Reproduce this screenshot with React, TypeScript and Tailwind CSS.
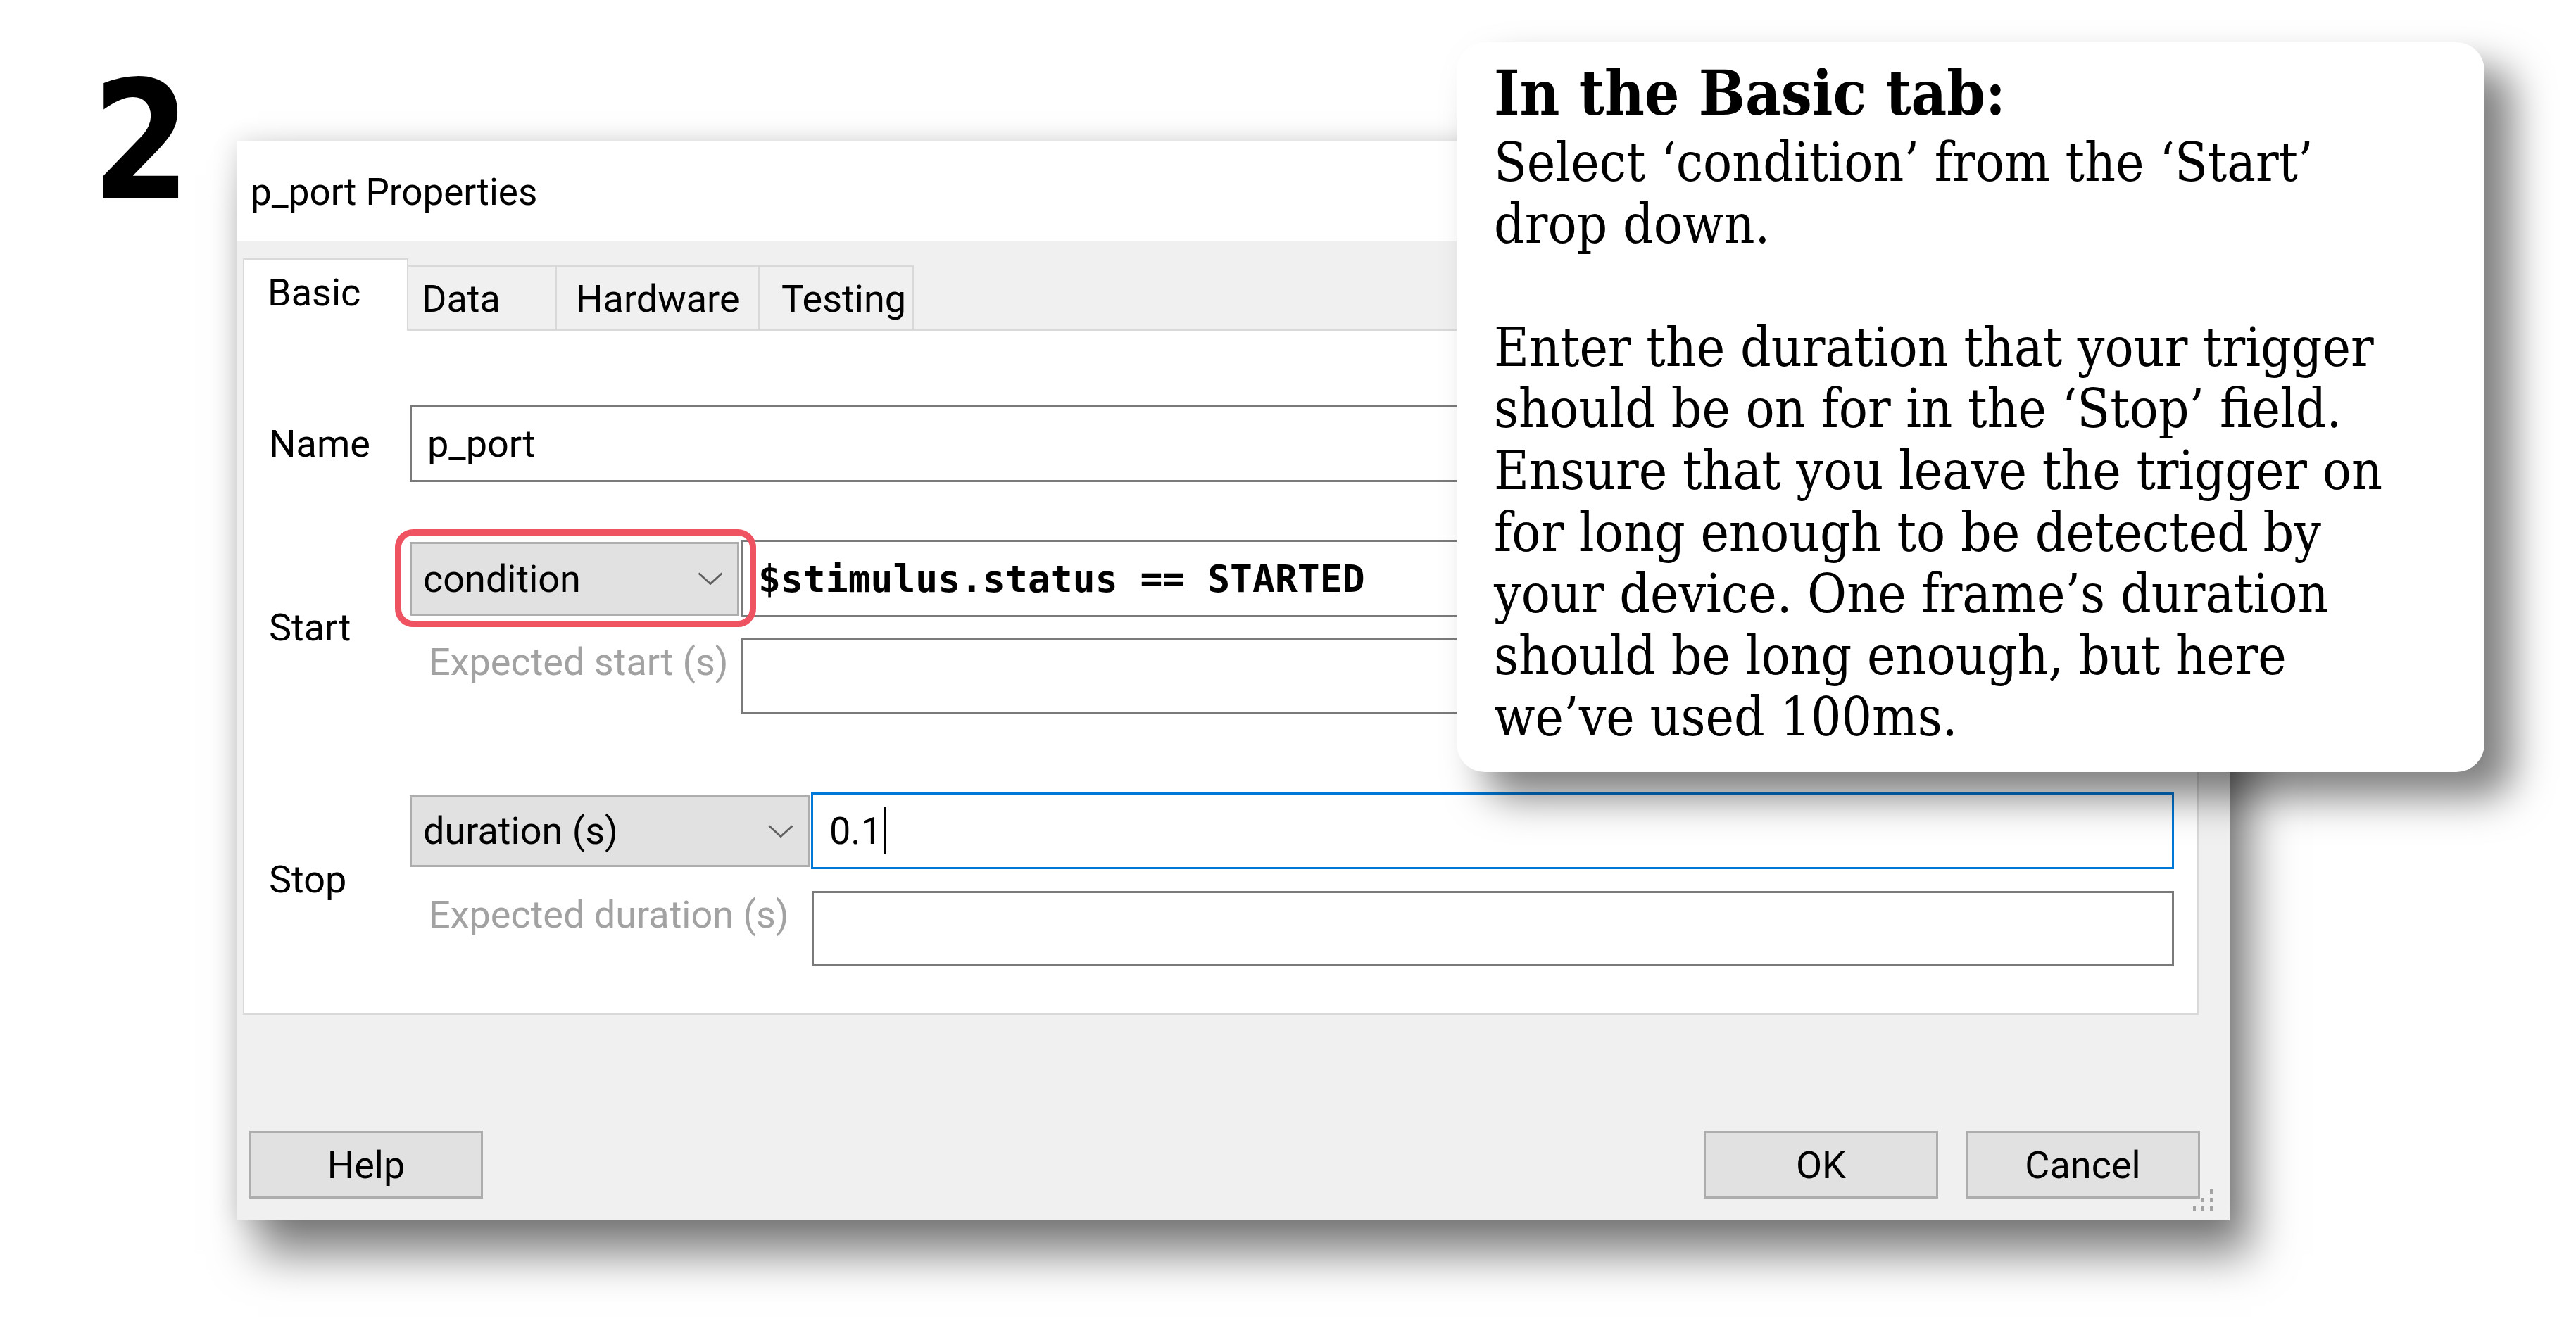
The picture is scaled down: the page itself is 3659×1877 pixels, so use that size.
import React from 'react';

const ui = "font-['Roboto','Open_Sans',sans-serif]";

function Chevron() {
  return (
    <svg width="36" height="18" viewBox="0 0 36 18" fill="none" className="shrink-0">
      <polyline points="1.5,1.5 18,16.5 34.5,1.5" stroke="#5f5f5f" strokeWidth="2.8" />
    </svg>
  );
}

function Combo({ label, className }: { label: string; className: string }) {
  return (
    <div
      className={`${className} shrink-0 bg-[#e1e1e1] border-[3px] border-[#adadad] flex items-center justify-between pl-[16px] pr-[20px]`}
    >
      <span>{label}</span>
      <Chevron />
    </div>
  );
}

function TextBox({ className, children }: { className: string; children?: React.ReactNode }) {
  return (
    <div className={`${className} flex-1 bg-white border-[3px] border-[#7a7a7a] flex items-center`}>
      {children}
    </div>
  );
}

function Button({ label, className }: { label: string; className: string }) {
  return (
    <div
      className={`${className} h-[96px] bg-[#e1e1e1] border-[3px] border-[#adadad] flex items-center justify-center`}
    >
      {label}
    </div>
  );
}

function SizeGrip() {
  return (
    <svg width="38" height="38" viewBox="0 0 38 38" className="absolute right-[20px] bottom-[10px]">
      {[
        [30, 4],
        [30, 16],
        [18, 16],
        [30, 28],
        [18, 28],
        [6, 28],
      ].map(([x, y]) => (
        <rect key={`${x}-${y}`} x={x} y={y} width="4" height="6" fill="#a3a3a3" />
      ))}
    </svg>
  );
}

function Dialog() {
  return (
    <div
      className={`${ui} relative w-[2831px] h-[1534px] mt-[115px] shrink-0 bg-[#f0f0f0] text-black text-[54px] leading-[63px] shadow-[30px_48px_60px_rgba(0,0,0,0.5),0_0_34px_rgba(0,0,0,0.14)] flex flex-col`}
    >
      {/* title bar */}
      <div className="h-[143px] shrink-0 bg-white pl-[20px] pt-[42px] text-[53px] leading-[62px]">
        p_port Properties
      </div>

      <div className="flex flex-col pl-[9px] pr-[44px] pt-[24px]">
        {/* tabs */}
        <div className="flex items-end h-[101px]">
          <div className="relative z-10 w-[235px] h-[103px] -mb-[2px] bg-white border-[2px] border-b-0 border-[#d9d9d9] pl-[33px] pt-[15px]">
            Basic
          </div>
          <div className="w-[211px] h-[91px] border-t-[2px] border-r-[2px] border-[#d9d9d9] pl-[19px] pt-[14px]">
            Data
          </div>
          <div className="w-[288px] h-[91px] border-t-[2px] border-r-[2px] border-[#d9d9d9] pl-[27px] pt-[14px]">
            Hardware
          </div>
          <div className="w-[219px] h-[91px] border-t-[2px] border-r-[2px] border-[#d9d9d9] pl-[31px] pt-[14px]">
            Testing
          </div>
        </div>

        {/* tab panel */}
        <div className="h-[974px] bg-white border-[2px] border-[#d9d9d9] pl-[35px] pr-[33px] pt-[106px] flex flex-col">
          <div className="flex items-center">
            <div className="w-[200px] shrink-0">Name</div>
            <TextBox className="h-[109px] pl-[22px]">p_port</TextBox>
          </div>

          {/* Start */}
          <div className="flex mt-[82px]">
            <div className="w-[200px] shrink-0 self-center">Start</div>
            <div className="flex-1 flex flex-col">
              <div className="flex items-center">
                <div className="relative mr-[2px]">
                  <Combo label="condition" className="w-[468px] h-[105px]" />
                  <div className="absolute z-10 left-[-21px] top-[-18px] right-[-24px] bottom-[-16px] border-[9px] border-[#ef5361] rounded-[26px]" />
                </div>
                <TextBox className="h-[110px] pl-[22px]">
                  <span className="font-['DejaVu_Sans_Mono','Liberation_Mono',monospace] font-bold text-[53px]">
                    $stimulus.status == STARTED
                  </span>
                </TextBox>
              </div>
              <div className="flex items-start mt-[30px]">
                <div className="w-[471px] shrink-0 pl-[27px] mt-[2px] text-[#a2a2a2]">Expected start (s)</div>
                <TextBox className="h-[108px]" />
              </div>
            </div>
          </div>

          {/* Stop */}
          <div className="flex mt-[111px]">
            <div className="w-[200px] shrink-0 self-center">Stop</div>
            <div className="flex-1 flex flex-col">
              <div className="flex items-center">
                <Combo label="duration (s)" className="w-[568px] h-[102px] mr-[2px]" />
                <div className="flex-1 h-[109px] bg-white border-[3px] border-[#0078d7] flex items-center pl-[23px]">
                  <span>0.1</span>
                  <span className="w-[3px] h-[67px] bg-black ml-[3px]" />
                </div>
              </div>
              <div className="flex items-start mt-[31px]">
                <div className="w-[571px] shrink-0 pl-[27px] mt-[2px] text-[#a2a2a2]">Expected duration (s)</div>
                <TextBox className="h-[107px]" />
              </div>
            </div>
          </div>
        </div>

        {/* buttons */}
        <div className="flex items-center mt-[165px] pl-[9px] mr-[-2px]">
          <Button label="Help" className="w-[332px]" />
          <div className="flex-1" />
          <Button label="OK" className="w-[333px]" />
          <Button label="Cancel" className="w-[333px] ml-[39px]" />
        </div>
      </div>

      <SizeGrip />
    </div>
  );
}

function Callout() {
  return (
    <div className="absolute z-20 left-[2069px] top-[60px] w-[1460px] h-[1037px] rounded-[40px] bg-white shadow-[40px_36px_56px_rgba(0,0,0,0.5)] pl-[53px] pt-[26px] text-black font-['DejaVu_Serif_Condensed','DejaVu_Serif',serif] [font-stretch:condensed] whitespace-nowrap">
      <div className="text-[87px] leading-[94px] font-bold">In the Basic tab:</div>
      <div className="mt-[7px] text-[76px] leading-[87.6px]">
        <div>Select ‘condition’ from the ‘Start’</div>
        <div>drop down.</div>
        <div className="h-[87.6px]" />
        <div>Enter the duration that your trigger</div>
        <div>should be on for in the ‘Stop’ field.</div>
        <div>Ensure that you leave the trigger on</div>
        <div>for long enough to be detected by</div>
        <div>your device. One frame’s duration</div>
        <div>should be long enough, but here</div>
        <div>we’ve used 100ms.</div>
      </div>
    </div>
  );
}

export default function App() {
  return (
    <div className="relative w-[3659px] h-[1877px] bg-white overflow-hidden flex items-start pl-[131px] pt-[85px]">
      <div className="w-[205px] shrink-0 font-['DejaVu_Sans',sans-serif] font-bold text-[233px] leading-[233px] scale-x-[0.86] origin-left text-black">
        2
      </div>
      <Dialog />
      <Callout />
    </div>
  );
}
